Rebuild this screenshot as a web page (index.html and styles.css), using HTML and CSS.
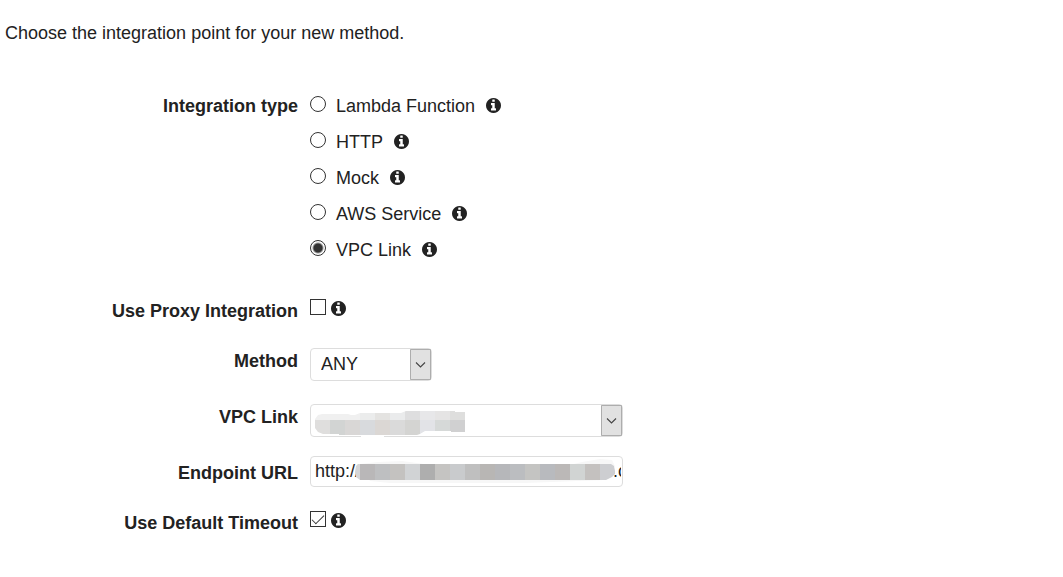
FILE: index.html
```html
<!DOCTYPE html>
<html lang="en">
<head>
<meta charset="utf-8">
<title>Method setup</title>
<link rel="stylesheet" href="styles.css">
</head>
<body>
<svg class="defs" aria-hidden="true">
  <symbol id="info" viewBox="0 0 1536 1536"><path d="M1024 1248v-160q0-14-9-23t-23-9h-96v-512q0-14-9-23t-23-9h-320q-14 0-23 9t-9 23v160q0 14 9 23t23 9h96v320h-96q-14 0-23 9t-9 23v160q0 14 9 23t23 9h448q14 0 23-9t9-23zM896 352v-160q0-14-9-23t-23-9h-192q-14 0-23 9t-9 23v160q0 14 9 23t23 9h192q14 0 23-9t9-23zM1536 768q0 209-103 385.5t-279.5 279.5-385.5 103-385.5-103-279.5-279.5-103-385.5 103-385.5 279.5-279.5 385.5-103 385.5 103 279.5 279.5 103 385.5z"/></symbol>
  <symbol id="arrow" viewBox="0 0 21 31"><path d="M0 0h21v31H0z" fill="#e1e1e1"/><path d="M.5.5h20v30H.5z" fill="none" stroke="#adadad"/><path d="M6 13.500l4.500 4.500 4.500-4.500" fill="none" stroke="#444" stroke-width="1.100"/></symbol>
</svg>
<main>
  <p class="intro">Choose the integration point for your new method.</p>
  <form class="form">
    <div class="row types" role="radiogroup" aria-labelledby="type-label">
      <span class="label" id="type-label">Integration type</span>
      <div class="options">
        <div class="option"><input type="radio" name="type" id="t1"><label for="t1">Lambda Function</label><svg class="info"><use href="#info"/></svg></div>
        <div class="option"><input type="radio" name="type" id="t2"><label for="t2">HTTP</label><svg class="info"><use href="#info"/></svg></div>
        <div class="option"><input type="radio" name="type" id="t3"><label for="t3">Mock</label><svg class="info"><use href="#info"/></svg></div>
        <div class="option"><input type="radio" name="type" id="t4"><label for="t4">AWS Service</label><svg class="info"><use href="#info"/></svg></div>
        <div class="option"><input type="radio" name="type" id="t5" checked><label for="t5">VPC Link</label><svg class="info"><use href="#info"/></svg></div>
      </div>
    </div>
    <div class="row proxy">
      <label class="label" for="proxy">Use Proxy Integration</label>
      <div class="check"><input type="checkbox" id="proxy"><svg class="info"><use href="#info"/></svg></div>
    </div>
    <div class="row">
      <label class="label" for="method">Method</label>
      <div class="field short"><select id="method"><option>ANY</option></select><svg class="arrow"><use href="#arrow"/></svg></div>
    </div>
    <div class="row">
      <label class="label" for="vpc">VPC Link</label>
      <div class="field"><select id="vpc"><option></option></select><svg class="arrow"><use href="#arrow"/></svg>
        <svg class="mask" viewBox="0 0 313 33" aria-hidden="true">
          <clipPath id="c1"><path d="M5 15l3-4 4-1h26l3 1h4l5-2h41l5-2h49v1h10v20h-14v-1h-26l-5 3-3 1H29v-1H13l-5-2-3-4z"/></clipPath>
          <path d="M51 32h23" stroke="#fff" stroke-width="2"/>
          <g clip-path="url(#c1)">
            <path fill="#f0f0f0" d="M5 5h45v11H5z"/><path fill="#ebecec" d="M50 5h15v11H50z"/><path fill="#e4e3e1" d="M65 5h15v11H65z"/><path fill="#eaebec" d="M80 5h15v11H80z"/><path fill="#dededf" d="M95 5h15v11H95z"/><path fill="#e7e7e9" d="M110 5h15v11h-15z"/><path fill="#e5e4e4" d="M125 5h15v11h-15z"/><path fill="#dededd" d="M140 5h15v11h-15z"/>
            <path fill="#dfdedd" d="M5 16h15v16H5z"/><path fill="#d2d4d3" d="M20 16h15v16H20z"/><path fill="#d9d7d6" d="M35 16h15v16H35z"/><path fill="#d8dadd" d="M50 16h15v16H50z"/><path fill="#dbd7d4" d="M65 16h15v16H65z"/><path fill="#dadada" d="M80 16h15v16H80z"/><path fill="#d4d4d2" d="M95 16h15v16H95z"/><path fill="#e2e3e7" d="M110 16h15v16h-15z"/><path fill="#d6d9d8" d="M125 16h15v16h-15z"/><path fill="#d0d0d1" d="M140 16h15v16h-15z"/>
          </g>
        </svg>
      </div>
    </div>
    <div class="row url">
      <label class="label" for="url">Endpoint URL</label>
      <div class="field"><input type="text" id="url" value="http://"><span class="tail">.c</span>
        <svg class="mask" viewBox="0 0 313 31" aria-hidden="true">
          <clipPath id="c2"><path d="M48 8h253l3 2 1 5v3l-3 3-6 3H50l-4-3-1-5 1-6z"/></clipPath>
          <path fill="#f7f7f7" d="M50 8l18-2 24-1 22 3h150l8-2 18-3 12 1 3 6-10 14-80 3H80l-20-2z"/>
          <g clip-path="url(#c2)">
            <path fill="#d5d5d6" d="M44 8h6v17h-6z"/><path fill="#b9b7b8" d="M50 8h15v17H50z"/><path fill="#bebfc1" d="M65 8h15v17H65z"/><path fill="#c4c2c0" d="M80 8h15v17H80z"/><path fill="#d1d3d5" d="M95 8h15v17H95z"/><path fill="#aeaeae" d="M110 8h15v17h-15z"/><path fill="#c5c4c2" d="M125 8h15v17h-15z"/><path fill="#c9cbcd" d="M140 8h15v17h-15z"/><path fill="#bfbfbf" d="M155 8h15v17h-15z"/><path fill="#b8b6b4" d="M170 8h15v17h-15z"/><path fill="#b6b7ba" d="M185 8h15v17h-15z"/><path fill="#bbbdc0" d="M200 8h15v17h-15z"/><path fill="#c4c4c2" d="M215 8h15v17h-15z"/><path fill="#b8babe" d="M230 8h15v17h-15z"/><path fill="#bbb8b7" d="M245 8h15v17h-15z"/><path fill="#d1d4d3" d="M260 8h15v17h-15z"/><path fill="#c4c1bf" d="M275 8h15v17h-15z"/><path fill="#cdced1" d="M290 8h15v17h-15z"/>
          </g>
        </svg>
      </div>
    </div>
    <div class="row timeout">
      <label class="label" for="timeout">Use Default Timeout</label>
      <div class="check"><input type="checkbox" id="timeout" checked><svg class="info"><use href="#info"/></svg></div>
    </div>
  </form>
</main>
</body>
</html>
```

FILE: styles.css
```css
* { box-sizing: border-box; }
body {
  margin: 0;
  background: #fff;
  color: #222;
  font: 18px/26px "Liberation Sans", Arial, sans-serif;
}
.defs { display: none; }
.intro { margin: 0; padding: 20px 5px 47px; }
.form { display: flex; flex-direction: column; }
.row {
  display: grid;
  grid-template-columns: 298px minmax(0, 1fr);
  column-gap: 12px;
  align-items: start;
  margin-bottom: 23px;
}
.label { font-weight: bold; text-align: right; }
.types { margin-bottom: 34px; }
.proxy { margin-bottom: 24px; }
.options { display: flex; flex-direction: column; gap: 10px; }
.option { display: flex; align-items: center; }
.option label { margin: 0 11px 0 10px; }
.info { width: 15px; height: 15px; fill: #222; flex: none; }
.option .info { margin-bottom: 2px; }

input[type="radio"], input[type="checkbox"] {
  appearance: none;
  flex: none;
  width: 16px;
  height: 16px;
  margin: 0;
  border: 1px solid #333;
  background: #fff;
}
input[type="radio"] { border-radius: 50%; margin-bottom: 4px; }
input[type="radio"]:checked { background: radial-gradient(circle, #333 4px, #fff 6px); }
input[type="checkbox"]:checked::before {
  content: "";
  display: block;
  width: 11px;
  height: 5px;
  margin: 3px 0 0 1px;
  border: solid #333;
  border-width: 0 0 1px 1px;
  transform: rotate(-45deg);
}
.check { display: flex; align-items: center; gap: 5px; padding-top: 1px; }
.check .info { margin-top: 3px; }

.field { position: relative; width: 100%; max-width: 313px; height: 33px; }
.short { max-width: 122px; }
select, input[type="text"] {
  appearance: none;
  display: block;
  width: 100%;
  height: 100%;
  border: 1px solid #ddd;
  border-radius: 4px;
  background: #fff;
  color: #222;
  font: inherit;
}
select { padding: 0 24px 2px 10px; }
input[type="text"] { padding: 0 4px; }
.arrow { position: absolute; top: 1px; right: 1px; width: 21px; height: 31px; }
.mask { position: absolute; top: 0; left: 0; width: 100%; height: 100%; pointer-events: none; }
.proxy .label, .timeout .label { padding-top: 1px; }
.url { margin-top: -4px; margin-bottom: 22px; }
.url .field { height: 31px; }
.url .label { padding-top: 4px; }
.tail {
  position: absolute;
  top: 2px;
  right: 2px;
  width: 8px;
  overflow: hidden;
}
```
